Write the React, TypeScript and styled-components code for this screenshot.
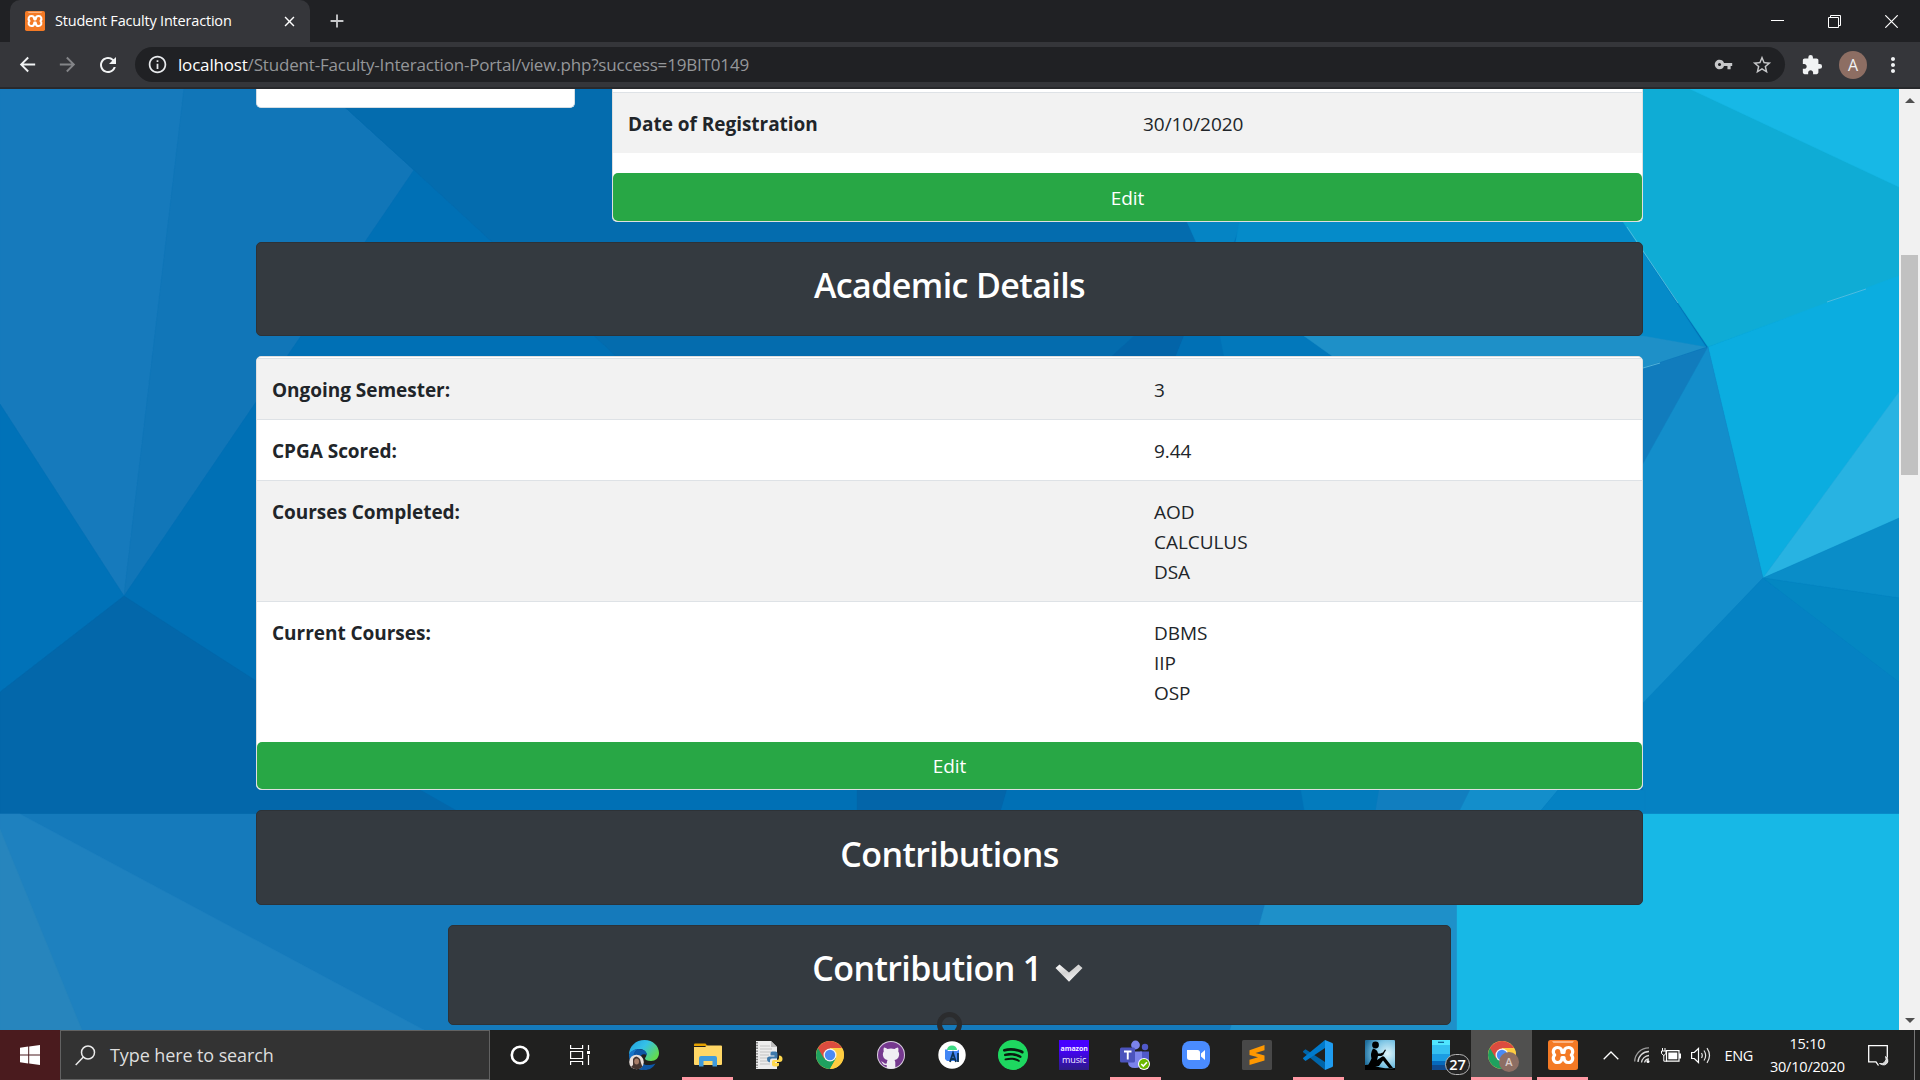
import React from "react";
import styled, { createGlobalStyle } from "styled-components";
import {
  MdArrowBack,
  MdArrowForward,
  MdRefresh,
  MdInfoOutline,
  MdVpnKey,
  MdStarBorder,
  MdExtension,
  MdMoreVert,
  MdClose,
  MdAdd,
} from "react-icons/md";
import { FaSpotify } from "react-icons/fa";

const Global = createGlobalStyle`
  * { box-sizing: border-box; }
  html, body { margin: 0; padding: 0; overflow: hidden; background: #202124; }
  body { font-family: "Open Sans", "Noto Sans", sans-serif; }
  svg { display: block; flex: none; }
`;

const Desktop = styled.div`
  width: 1920px;
  height: 1080px;
  display: flex;
  flex-direction: column;
  overflow: hidden;
`;

/* ---------- browser chrome ---------- */

const TabStrip = styled.div`
  height: 42px;
  display: flex;
  align-items: center;
  padding-left: 10px;
  background: #202124;
  color: #fff;
`;

const Tab = styled.div`
  width: 300px;
  height: 42px;
  display: flex;
  align-items: center;
  padding: 0 12px 0 15px;
  background: #35363a;
  border-radius: 10px 10px 0 0;
`;

const TabTitle = styled.span`
  flex: 1;
  margin-left: 10px;
  font-size: 14.5px;
  letter-spacing: -0.19px;
  line-height: 20px;
  white-space: nowrap;
`;

const NewTab = styled.div`
  margin-left: 16px;
  color: #c8c9cb;
`;

const WindowButtons = styled.div`
  margin-left: auto;
  display: flex;
  height: 36px;
`;

const WindowButton = styled.div`
  width: 57px;
  display: flex;
  align-items: center;
  justify-content: center;
`;

const Toolbar = styled.div`
  height: 47px;
  display: flex;
  align-items: center;
  padding-left: 16px;
  background: #35363a;
  border-bottom: 2px solid #28292c;
`;

const NavIcon = styled.div<{ $dim?: boolean }>`
  width: 40px;
  color: ${(p) => (p.$dim ? "#848588" : "#f1f3f4")};
`;

const Omnibox = styled.div`
  width: 1650px;
  height: 35px;
  display: flex;
  align-items: center;
  padding: 0 12px 0 12px;
  margin-left: -1px;
  border-radius: 18px;
  background: #202124;
  color: #c6c7c9;
`;

const Url = styled.span`
  flex: 1;
  margin-left: 10px;
  font-size: 17px;
  line-height: 24px;
  letter-spacing: -0.18px;
  color: #95979a;
  white-space: nowrap;
  b { font-weight: 400; color: #fff; }
`;

const OmniIcon = styled.div`
  margin-left: 18px;
`;

const ToolbarEnd = styled.div`
  display: flex;
  align-items: center;
  margin-left: 16px;
  color: #f1f3f4;
`;

const Avatar = styled.div`
  width: 28px;
  height: 28px;
  margin: 0 14px 0 16px;
  border-radius: 50%;
  background: #8d6e63;
  font-size: 16px;
  line-height: 28px;
  text-align: center;
`;

/* ---------- page ---------- */

const Viewport = styled.div`
  height: 941px;
  display: flex;
  overflow: hidden;
`;

const Page = styled.div`
  position: relative;
  width: 1899px;
  height: 941px;
  overflow: hidden;
`;

const Backdrop = styled.svg`
  position: absolute;
  left: 0;
  top: 0;
`;

const Content = styled.main`
  position: relative;
  width: 1387px;
  margin-left: 256px;
  display: flex;
  flex-direction: column;
`;

const TopRow = styled.div`
  display: flex;
  align-items: flex-start;
  justify-content: space-between;
`;

const PhotoCard = styled.div`
  width: 319px;
  height: 19px;
  background: #fff;
  border: 1px solid #d5dde3;
  border-top: 0;
  border-radius: 0 0 5px 5px;
`;

const Card = styled.section<{ $width?: number; $cut?: boolean }>`
  width: ${(p) => (p.$width ? `${p.$width}px` : "100%")};
  padding-top: ${(p) => (p.$cut ? 3 : 1)}px;
  background: #fff;
  border: 1px solid #dfdfdf;
  border-top-width: ${(p) => (p.$cut ? 0 : 1)}px;
  border-radius: ${(p) => (p.$cut ? "0 0 5px 5px" : "5px")};
`;

const Row = styled.div<{ $striped?: boolean; $split: number }>`
  display: grid;
  grid-template-columns: ${(p) => p.$split}px 1fr;
  padding: 16px 15px 14px;
  border-top: 1px solid #dee2e6;
  background: ${(p) => (p.$striped ? "#f2f2f2" : "#fff")};
  color: #212529;
  font-size: 19px;
  line-height: 30px;
`;

const Label = styled.div`
  font-weight: 700;
  letter-spacing: -0.03px;
`;

const Value = styled.div`
  letter-spacing: -0.05px;
`;

const EditButton = styled.button<{ $height: number }>`
  display: block;
  width: 100%;
  height: ${(p) => p.$height}px;
  margin-top: 20px;
  padding: 1px 0 0;
  border: 0;
  border-radius: 5px;
  background: #28a745;
  color: #fff;
  font-family: inherit;
  font-size: 19px;
  letter-spacing: -0.1px;
`;

const Banner = styled.header<{ $width?: number; $height: number; $top?: number }>`
  width: ${(p) => (p.$width ? `${p.$width}px` : "100%")};
  height: ${(p) => p.$height}px;
  margin: 20px auto 0;
  padding-top: ${(p) => p.$top ?? 21}px;
  display: flex;
  justify-content: center;
  background: #343a40;
  border: 1px solid #2d3237;
  border-radius: 5px;
  color: #fff;
`;

const Heading = styled.h3`
  display: flex;
  margin: 0;
  font-size: 34px;
  line-height: 42px;
  font-weight: 600;
  letter-spacing: -0.6px;
  white-space: nowrap;
`;

const Chevron = styled.svg`
  margin: 17px 4px 0 13px;
`;

const Spacer = styled.div`
  height: 20px;
`;

const Ring = styled.div`
  position: absolute;
  left: 937px;
  top: 923px;
  width: 25px;
  height: 25px;
  border: 5px solid #2b2c2e;
  border-radius: 50%;
`;

const ScrollTrack = styled.div`
  width: 21px;
  display: flex;
  flex-direction: column;
  align-items: center;
  justify-content: space-between;
  padding: 8px 0 6px;
  background: #f1f1f1;
`;

const Thumb = styled.div`
  width: 17px;
  height: 220px;
  margin: 152px 0 auto;
  background: #c1c1c1;
`;

/* ---------- taskbar ---------- */

const Taskbar = styled.footer`
  height: 50px;
  display: flex;
  background: #20201f;
  color: #fff;
`;

const StartButton = styled.div`
  width: 60px;
  display: flex;
  align-items: center;
  justify-content: center;
  background: #4a1b1e;
`;

const SearchBox = styled.div`
  width: 430px;
  display: flex;
  align-items: center;
  padding-left: 14px;
  background: #333;
  border: 1px solid #626262;
  color: #dedede;
  font-size: 18px;
  letter-spacing: -0.1px;
`;

const SearchText = styled.span`
  margin-left: 14px;
  white-space: nowrap;
`;

const SystemSlot = styled.div`
  width: 60px;
  display: flex;
  align-items: center;
  justify-content: center;
`;

const Apps = styled.div`
  display: flex;
  margin-left: 1px;
`;

const AppSlot = styled.div<{ $open?: boolean; $active?: boolean; $width?: number }>`
  position: relative;
  width: ${(p) => p.$width ?? 61.1}px;
  display: flex;
  align-items: center;
  justify-content: center;
  background: ${(p) => (p.$active ? "#50504f" : "transparent")};
  &::after {
    content: "";
    position: absolute;
    bottom: 0;
    left: ${(p) => (p.$active ? 0 : 5)}px;
    right: ${(p) => (p.$active ? 0 : 5)}px;
    height: ${(p) => (p.$open ? 3 : 0)}px;
    background: #ff99a4;
  }
`;

const AmazonTile = styled.div`
  width: 30px;
  height: 30px;
  padding-top: 3px;
  background: linear-gradient(#4600ff 30%, #2d1b85);
  display: flex;
  flex-direction: column;
  align-items: center;
  line-height: 11px;
`;

const AmazonWord = styled.span<{ $size: number; $weight: number }>`
  height: 11px;
  font-size: ${(p) => p.$size}px;
  font-weight: ${(p) => p.$weight};
  letter-spacing: -0.1px;
  color: #f4efff;
`;

const Badge = styled.div`
  position: absolute;
  left: 35px;
  top: 24px;
  width: 25px;
  height: 21px;
  border: 1px solid #b5b5b5;
  border-radius: 11px;
  background: #242424;
  font-size: 14.5px;
  font-weight: 600;
  line-height: 19px;
  text-align: center;
`;

const Tray = styled.div`
  position: relative;
  flex: 1;
  display: flex;
  align-items: center;
  padding-left: 10px;
`;

const TrayIcon = styled.div<{ $left: number }>`
  margin-left: ${(p) => p.$left}px;
`;

const Language = styled.span`
  width: 31px;
  margin-left: 13px;
  font-size: 14.5px;
  letter-spacing: -0.3px;
`;

const Clock = styled.div`
  width: 80px;
  margin: 0 21px 0 12px;
  font-size: 14.5px;
  letter-spacing: -0.2px;
  line-height: 23px;
  text-align: center;
  white-space: nowrap;
`;

const ShowDesktop = styled.div`
  width: 6px;
  height: 50px;
  margin-left: auto;
  border-left: 1px solid #767676;
`;

/* ---------- drawings ---------- */

const facets: [string, string][] = [
  ["0,89 184,89 124,596 0,404", "#167abc"],
  ["184,89 325,89 414,170 124,596", "#1176b8"],
  ["325,89 640,89 640,356 616,356 414,170", "#046cae"],
  ["414,170 616,356 616,400 300,760 124,596", "#0070b5"],
  ["600,89 1140,89 1187,222 1205,260 1134,336 1112,356 616,356 414,170 325,89", "#046cae"],
  ["1134,336 1184,336 1176,356 1112,356", "#0364a8"],
  ["1184,336 1220,336 1224,356 1176,356", "#0070b5"],
  ["1220,336 1304,336 1332,356 1224,356", "#0278bb"],
  ["1140,89 1290,89 1234,242 1196,242 1187,222", "#0584c4"],
  ["1265,89 1643,89 1643,252 1706,347 1643,337 1234,250", "#058bc9"],
  ["1304,336 1643,336 1706,347 1643,368 1332,356", "#1e90c8"],
  ["1560,89 1920,89 1920,270 1708,347 1623,222", "#0facd5"],
  ["1690,89 1920,89 1920,195 1899,187", "#17b8e6"],
  ["1708,347 1920,268 1920,364 1763,578", "#0badE0"],
  ["1763,578 1899,392 1920,364 1920,509", "#28b3e2"],
  ["1643,368 1708,347 1643,464", "#117cbd"],
  ["1708,347 1763,578 1643,704 1643,464", "#138ecb"],
  ["1643,703 1763,578 1920,698 1920,814 1643,814", "#0582c3"],
  ["1763,578 1899,518 1920,509 1920,601", "#0a8dc8"],
  ["1763,578 1920,601 1920,698", "#0487c2"],
  ["0,404 124,596 0,692", "#0072b8"],
  ["0,692 124,596 457,810 457,814 0,814", "#0367aa"],
  ["421,790 857,790 857,814 463,814", "#0070b5"],
  ["857,790 1007,790 1000,814 857,814", "#0365a9"],
  ["1007,790 1301,790 1305,814 1000,814", "#0070b5"],
  ["1301,790 1379,790 1375,814 1305,814", "#037bbd"],
  ["1379,790 1470,790 1458,814 1375,814", "#117ebf"],
  ["1470,790 1558,790 1538,814 1458,814", "#138ecb"],
  ["1558,790 1645,790 1645,814 1538,814", "#0582c3"],
  ["0,814 1290,814 1230,1030 0,1030", "#157abb"],
  ["0,814 20,814 424,1030 0,1030", "#1e81bf"],
  ["0,829 82,1030 0,1030", "#2785bd"],
  ["1290,814 1457,814 1457,1030 1230,1030", "#1e90c9"],
  ["1457,814 1900,814 1900,1030 1457,1030", "#17b8e6"],
];

const PolyBackdrop = () => (
  <Backdrop width="1899" height="941" viewBox="0 89 1899 941">
    <rect y="89" width="1899" height="941" fill="#0070b5" />
    {facets.map(([points, fill], i) => (
      <polygon key={i} points={points} fill={fill} stroke={fill} strokeWidth="0.4" />
    ))}
    <path d="M1827 302 L1866 289 M1643 368 L1660 363 M1627 227 L1678 303" stroke="#5fbfe0" strokeWidth="0.8" />
  </Backdrop>
);

const Xampp = ({ size }: { size: number }) => (
  <svg width={size} height={size} viewBox="0 0 30 30">
    <rect width="30" height="30" rx="2.500" fill="#f47a25" />
    <path d="M4 1.200h22l-1.500 1.600h-19z" fill="#ffc9a0" />
    <path
      d="M9.500 7.500c3.400 0 4.500 2 4.500 5h2c0-3 1.100-5 4.500-5 4 0 5.500 4.500 2.800 7.500 2.700 3 1.200 7.500-2.800 7.500-3.400 0-4.500-2-4.500-5h-2c0 3-1.100 5-4.500 5-4 0-5.500-4.500-2.800-7.500-2.700-3-1.200-7.500 2.800-7.500z"
      fill="none"
      stroke="#fff"
      strokeWidth="3.200"
      strokeLinejoin="round"
    />
  </svg>
);

const Chrome = () => (
  <svg width="28" height="28" viewBox="0 0 28 28">
    <circle cx="14" cy="14" r="14" fill="#fdd04a" />
    <path d="M14 14 L1.900 7 A14 14 0 0 0 14 28 L20 17.500z" fill="#1fa15f" />
    <path d="M14 14 L8 17.500 L1.900 7 A14 14 0 0 1 26.100 7 L14 7z" fill="#dc4c3f" />
    <path d="M14 7.500H26.300A14 14 0 0 1 14 28L20 17.500z" fill="#ffcd40" />
    <circle cx="14" cy="14" r="6.500" fill="#f4f4f4" />
    <circle cx="14" cy="14" r="5.200" fill="#4a8af4" />
  </svg>
);

const ChromeProfile = styled.div`
  position: relative;
`;

const ProfileDot = styled.div`
  position: absolute;
  left: 11px;
  top: 11px;
  width: 20px;
  height: 20px;
  border-radius: 50%;
  background: #8d6e63;
  color: #d9ccc7;
  font-size: 11px;
  font-weight: 600;
  line-height: 20px;
  text-align: center;
`;

const Edge = () => (
  <svg width="30" height="30" viewBox="0 0 30 30">
    <defs>
      <linearGradient id="edgeTop" x1="0" y1="0" x2="1" y2="0.6">
        <stop offset="0" stopColor="#1f9fe0" />
        <stop offset="0.5" stopColor="#35c1e8" />
        <stop offset="1" stopColor="#62db52" />
      </linearGradient>
    </defs>
    <path d="M0 15C0 6 7 0 15.500 0 24 0 30 6 30 13c0 5-3.500 8-8 8-3.500 0-6-1-6-2.500 0-1 1.500-1.500 1.500-4 0-3-3-5.500-7-5.500-5 0-9 3-10.500 6z" fill="url(#edgeTop)" />
    <path d="M0 15c1-3.500 5-6 9-6-3 2-4.500 5-4.500 8.500C4.500 24 10 29 16 30 7 30.600 0 24 0 15z" fill="#1673c8" />
    <path d="M9 9c5-.5 9 2.500 9 6-4-2-7 0-7 4 0 5 6 8 15.500 4.500C24 28 20 30 16 30 9 30 4 24 4.500 17.500 4.500 13 6.500 10 9 9z" fill="#0e57a6" />
    <circle cx="7.500" cy="22" r="7.300" fill="#e9dfdb" />
    <path d="M4 19q3-5 7 0l1 4 1.500 4q-5.500 4.500-11.500 0L4 25z" fill="#463530" />
    <ellipse cx="7.600" cy="21.500" rx="2.400" ry="3" fill="#a77d68" />
  </svg>
);

const Explorer = () => (
  <svg width="28" height="24" viewBox="0 0 28 24">
    <path d="M0 1.500Q0 .5 1 .5h10.500l2 2.500H0z" fill="#e5a100" />
    <path d="M0 4h11l2-1.500h14q1 0 1 1V21q0 1-1 1H1q-1 0-1-1z" fill="#ffd766" />
    <path d="M5 23.500V15q0-2 2-2h14q2 0 2 2v8.500h-4.500V18h-9v5.500z" fill="#3f9bdc" />
  </svg>
);

const PythonFile = () => (
  <svg width="28" height="28" viewBox="0 0 28 28">
    <path d="M1 0h15l6 6v22H1z" fill="#ececec" />
    <path d="M16 0l6 6h-6z" fill="#bdbdbd" />
    <path d="M2 1v26" stroke="#666" strokeWidth="1.600" strokeDasharray="1.400 1.400" />
    <path d="M5 5h10M5 8h12M5 11h11M5 14h9M5 17h8M5 20h8M5 23h10" stroke="#b9b9b9" strokeWidth="0.8" />
    <path d="M17 10.500h3.500q2 0 2 2V16q0 1.500-1.500 1.500h-4q-2 0-2 2v1.800h-1q-2-.5-2-3.300 0-2.500 2.500-2.500h5v-1h-4v-2q0-2 1.500-2z" fill="#3c78ab" />
    <path d="M24 14.500q3.500.2 3.500 3.500 0 3-3 3h-4.500v1h4v2q0 1.500-3.500 1.500t-3.500-1.800v-3q0-1.700 1.700-1.700H22q2 0 2-2z" fill="#ffd84d" />
  </svg>
);

const GithubDesktop = () => (
  <svg width="28" height="28" viewBox="0 0 28 28">
    <circle cx="14" cy="14" r="14" fill="#d9cfe0" />
    <circle cx="14" cy="14" r="13" fill="#76398f" />
    <path d="M7 6.500q2 0 3.500 1.500 3.500-.8 7 0Q19 6.500 21 6.500q.8 2 .2 3.700Q22.500 12 22 14.500q-.6 3.700-4.500 4.500.8 1 .8 2.500v5.600q-4.300 1.200-8.600 0V24q-3 .4-4-1.500-.7-1.500-1.700-2 1.800-.3 3 1.500 1 1 2.700.5.200-2 .8-3.500-3.900-.8-4.500-4.500-.5-2.500.8-4.300Q6.200 8.500 7 6.500z" fill="#f0edf3" />
  </svg>
);

const AndroidStudio = () => (
  <svg width="28" height="28" viewBox="0 0 28 28">
    <circle cx="14" cy="14" r="13.700" fill="#fff" />
    <path d="M9 9a5 4.500 0 0 1 10 0z" fill="#3ddc84" />
    <path d="M7 8.500h2l1 1.500h9l2-1.500V19l-2 1H9l-2-2z" fill="#4285f4" />
    <path d="M12 21l3-9 3 9M13 18h4M20 12v9" stroke="#0b3354" strokeWidth="1.800" fill="none" />
  </svg>
);

const SpotifyDisc = styled.div`
  width: 30px;
  height: 30px;
  border-radius: 50%;
  background: radial-gradient(#0a1a0f 60%, #1ed760 62%);
  color: #1ed760;
`;

const Teams = () => (
  <svg width="30" height="30" viewBox="0 0 30 30">
    <circle cx="25" cy="7" r="3.200" fill="#5059c9" />
    <circle cx="15.500" cy="5" r="4.400" fill="#7b83eb" />
    <path d="M20 11.500h9v9q0 5-5 5h-4z" fill="#5059c9" />
    <path d="M8 11.500h14V22q0 6-7 6t-7-6z" fill="#7b83eb" />
    <rect x="0" y="7.500" width="15" height="15" rx="1.500" fill="#4b53bc" />
    <path d="M4 11.500h7.500M7.750 11.500v8" stroke="#fff" strokeWidth="1.900" />
    <circle cx="24" cy="24" r="6" fill="#fff" />
    <circle cx="24" cy="24" r="5" fill="#6bb700" />
    <path d="M21.300 24l2 2 3.600-3.800" stroke="#fff" strokeWidth="1.600" fill="none" />
  </svg>
);

const Zoom = () => (
  <svg width="28" height="28" viewBox="0 0 28 28">
    <rect width="28" height="28" rx="8" fill="#4a8cff" />
    <path d="M5 9h10.500q2.500 0 2.500 2.500V19H7.500Q5 19 5 16.500zM19 12.500L23 9v10l-4-3.500z" fill="#fff" />
  </svg>
);

const Sublime = () => (
  <svg width="30" height="30" viewBox="0 0 30 30">
    <rect width="30" height="30" rx="1.500" fill="#484848" />
    <path d="M7.500 10.200L22.500 5v5.300L13.500 13l9 2.500v5L7.500 25v-5.200l8.500-2.600-8.500-2.200z" fill="#ff9800" />
  </svg>
);

const VsCode = () => (
  <svg width="30" height="30" viewBox="0 0 30 30">
    <path d="M2.500 9.200L.3 11q-.6.700 0 1.300L22 30V22z" fill="#0065a9" />
    <path d="M2.500 21L.3 19q-.6-.7 0-1.300L22 0v8z" fill="#007acc" />
    <path d="M22 0l7.300 3q.7.400.7 1.200v21.600q0 .8-.7 1.200L22 30z" fill="#1f9cf0" />
  </svg>
);

const Kindle = () => (
  <svg width="30" height="30" viewBox="0 0 30 30">
    <defs>
      <radialGradient id="kindleSky" cx="0.75" cy="0.45" r="0.8">
        <stop offset="0" stopColor="#dff5fb" />
        <stop offset="0.55" stopColor="#7cc4e4" />
        <stop offset="1" stopColor="#1f6e9c" />
      </radialGradient>
    </defs>
    <rect width="30" height="30" rx="1" fill="url(#kindleSky)" />
    <path d="M0 25q6-1 12 1.500T30 28v2H0z" fill="#000" />
    <circle cx="10.500" cy="5" r="3.400" fill="#000" />
    <path d="M8 8.500q-3 5-1.500 10Q4 24 2.500 26H14l4-5.500 6 7.500h4l-8.500-11q-1.500-1.500-3 0L12 20l1-4h3.500l2-2-1-1.500-2 1H13q-.5-4-5-5z" fill="#000" />
    <path d="M16.500 14.500l3.500-5 1 .6-3.200 5.400z" fill="#000" />
  </svg>
);

const Phone = () => (
  <svg width="18" height="30" viewBox="0 0 18 30">
    <rect width="18" height="30" rx="1" fill="#35c1f1" />
    <path d="M0 0h18v5H0z" fill="#50e6ff" />
    <path d="M6 2.300h6" stroke="#0a5c91" strokeWidth="1.200" />
    <path d="M0 14h18v7H0z" fill="#1b9de2" />
    <path d="M0 21h18v8q0 1-1 1H1q-1 0-1-1z" fill="#0669bc" />
    <path d="M0 25h18v4q0 1-1 1H1q-1 0-1-1z" fill="#0f4a8f" />
  </svg>
);

const academic = [
  { label: "Ongoing Semester:", values: ["3"] },
  { label: "CPGA Scored:", values: ["9.44"] },
  { label: "Courses Completed:", values: ["AOD", "CALCULUS", "DSA"] },
  { label: "Current Courses:", values: ["DBMS", "IIP", "OSP"] },
];

const BrowserChrome = () => (
  <>
    <TabStrip>
      <Tab>
        <Xampp size={20} />
        <TabTitle>Student Faculty Interaction</TabTitle>
        <MdClose size={17} />
      </Tab>
      <NewTab>
        <MdAdd size={22} />
      </NewTab>
      <WindowButtons>
        <WindowButton>
          <svg width="13" height="13">
            <path d="M0 5.500h13" stroke="#fff" />
          </svg>
        </WindowButton>
        <WindowButton>
          <svg width="13" height="13">
            <path d="M.5 2.500h10v10h-10zM2.500 2.500v-2h10v10h-2" stroke="#fff" fill="none" />
          </svg>
        </WindowButton>
        <WindowButton>
          <svg width="13" height="13">
            <path d="M.3.300l12.400 12.400M12.700.300L.3 12.700" stroke="#fff" strokeWidth="1.200" />
          </svg>
        </WindowButton>
      </WindowButtons>
    </TabStrip>
    <Toolbar>
      <NavIcon>
        <MdArrowBack size={23} />
      </NavIcon>
      <NavIcon $dim>
        <MdArrowForward size={23} />
      </NavIcon>
      <NavIcon>
        <MdRefresh size={24} />
      </NavIcon>
      <Omnibox>
        <MdInfoOutline size={21} color="#e8eaed" />
        <Url>
          <b>localhost</b>/Student-Faculty-Interaction-Portal/view.php?success=19BIT0149
        </Url>
        <OmniIcon>
          <MdVpnKey size={19} />
        </OmniIcon>
        <OmniIcon>
          <MdStarBorder size={22} />
        </OmniIcon>
      </Omnibox>
      <ToolbarEnd>
        <MdExtension size={22} />
        <Avatar>A</Avatar>
        <MdMoreVert size={24} />
      </ToolbarEnd>
    </Toolbar>
  </>
);

const PortalPage = () => (
  <Page>
    <PolyBackdrop />
    <Content>
      <TopRow>
        <PhotoCard />
        <Card $width={1031} $cut>
          <Row $striped $split={515}>
            <Label>Date of Registration</Label>
            <Value>30/10/2020</Value>
          </Row>
          <EditButton $height={48}>Edit</EditButton>
        </Card>
      </TopRow>
      <Banner $height={94}>
        <Heading>Academic Details</Heading>
      </Banner>
      <Spacer />
      <Card>
        {academic.map((row, i) => (
          <Row key={row.label} $striped={i % 2 === 0} $split={882}>
            <Label>{row.label}</Label>
            <Value>
              {row.values.map((v) => (
                <div key={v}>{v}</div>
              ))}
            </Value>
          </Row>
        ))}
        <EditButton $height={47}>Edit</EditButton>
      </Card>
      <Banner $height={95} $top={22}>
        <Heading>Contributions</Heading>
      </Banner>
      <Banner $width={1003} $height={100}>
        <Heading>
          Contribution 1
          <Chevron width="28" height="18" viewBox="0 0 28 18">
            <defs>
              <linearGradient id="chev" x1="0" y1="0" x2="0.6" y2="1">
                <stop offset="0" stopColor="#ffffff" />
                <stop offset="0.5" stopColor="#d2d2d2" />
                <stop offset="1" stopColor="#f4f4f4" />
              </linearGradient>
            </defs>
            <path d="M.5 4L4.500.500 14 8.500 23.500.500l4 3.500L14 17.700z" fill="url(#chev)" />
          </Chevron>
        </Heading>
      </Banner>
    </Content>
    <Ring />
  </Page>
);

const Scrollbar = () => (
  <ScrollTrack>
    <svg width="10" height="6">
      <path d="M0 6L5 1l5 5z" fill="#505050" />
    </svg>
    <Thumb />
    <svg width="10" height="6">
      <path d="M0 0l5 5 5-5z" fill="#505050" />
    </svg>
  </ScrollTrack>
);

const TaskbarStrip = () => (
  <Taskbar>
    <StartButton>
      <svg width="20" height="20" viewBox="0 0 20 20">
        <path d="M0 2.800L8.200 1.600V9.500H0zM9.200 1.500L20 0v9.500H9.200zM0 10.500h8.200v7.900L0 17.200zM9.200 10.500H20V20L9.200 18.500z" fill="#fff" />
      </svg>
    </StartButton>
    <SearchBox>
      <svg width="21" height="21" viewBox="0 0 21 21">
        <circle cx="13" cy="7.500" r="6.500" fill="none" stroke="#ececec" strokeWidth="1.500" />
        <path d="M8.400 12.100L.7 20" stroke="#ececec" strokeWidth="1.500" />
      </svg>
      <SearchText>Type here to search</SearchText>
    </SearchBox>
    <SystemSlot>
      <svg width="20" height="20">
        <circle cx="10" cy="10" r="8.200" fill="none" stroke="#fff" strokeWidth="2.600" />
      </svg>
    </SystemSlot>
    <SystemSlot>
      <svg width="20" height="20">
        <path d="M.6 0v3.500h12V0M.6 20v-3.500h12V20M.6 6.500h12v7H.6zM18.500 0v5M18.500 10v10" fill="none" stroke="#fff" strokeWidth="1.200" />
        <path d="M17 6h3v3h-3z" fill="#fff" />
      </svg>
    </SystemSlot>
    <Apps>
      <AppSlot $width={66}><Edge /></AppSlot>
      <AppSlot $open><Explorer /></AppSlot>
      <AppSlot><PythonFile /></AppSlot>
      <AppSlot><Chrome /></AppSlot>
      <AppSlot><GithubDesktop /></AppSlot>
      <AppSlot><AndroidStudio /></AppSlot>
      <AppSlot>
        <SpotifyDisc><FaSpotify size={30} /></SpotifyDisc>
      </AppSlot>
      <AppSlot>
        <AmazonTile>
          <AmazonWord $size={7} $weight={700}>amazon</AmazonWord>
          <AmazonWord $size={9} $weight={400}>music</AmazonWord>
        </AmazonTile>
      </AppSlot>
      <AppSlot $open><Teams /></AppSlot>
      <AppSlot><Zoom /></AppSlot>
      <AppSlot><Sublime /></AppSlot>
      <AppSlot $open><VsCode /></AppSlot>
      <AppSlot><Kindle /></AppSlot>
      <AppSlot>
        <Phone />
        <Badge>27</Badge>
      </AppSlot>
      <AppSlot $open $active>
        <ChromeProfile>
          <Chrome />
          <ProfileDot>A</ProfileDot>
        </ChromeProfile>
      </AppSlot>
      <AppSlot $open><Xampp size={30} /></AppSlot>
    </Apps>
    <Tray>
      <svg width="16" height="9">
        <path d="M.7 8.300L8 1l7.300 7.300" fill="none" stroke="#fff" strokeWidth="1.300" />
      </svg>
      <TrayIcon $left={15}>
        <svg width="16" height="16">
          <path d="M.7 14.500A14 14 0 0 1 15 .8" fill="none" stroke="#9b9b9b" strokeWidth="1.300" />
          <path d="M4 15A11 11 0 0 1 15 4.500M7.500 15.500A8 8 0 0 1 15 8.500M10.500 15.500A5 5 0 0 1 15 12" fill="none" stroke="#dcdcdc" strokeWidth="1.300" />
          <circle cx="14" cy="14.500" r="1.500" fill="#fff" />
        </svg>
      </TrayIcon>
      <TrayIcon $left={11}>
        <svg width="20" height="15">
          <path d="M5.500 2.600h12.500v10.500h-12.500z M18.500 6h1v4h-1z" fill="none" stroke="#fff" strokeWidth="1.200" />
          <path d="M7.300 4.500h9v6.800h-9z" fill="#fff" />
          <path d="M1.500 0v3M4 0v3M.5 3h4.500v2.500L2.800 7.500.5 5.500zM2.800 7v6.200h3" fill="none" stroke="#fff" />
        </svg>
      </TrayIcon>
      <TrayIcon $left={10}>
        <svg width="20" height="17">
          <path d="M.6 5.500h2.700L7.500 1.500v14L3.300 11.500H.6z" fill="none" stroke="#fff" strokeWidth="1.200" />
          <path d="M10.500 6q1.500 2.500 0 5M13 3.500q3.300 5 0 10M16 1.200q5 7.300 0 14.600" fill="none" stroke="#e6e6e6" strokeWidth="1.200" />
        </svg>
      </TrayIcon>
      <Language>ENG</Language>
      <Clock>
        15:10
        <br />
        30/10/2020
      </Clock>
      <svg width="21" height="21">
        <path d="M10.500 20.500L8 16.800H.7V.7h18.600v12" fill="none" stroke="#fff" strokeWidth="1.300" />
        <path d="M17.500 11.500a5 5 0 0 1-6 7q6 3.500 8.300-1.500.8-3.500-2.300-5.500z" fill="#d8d8d8" stroke="#fff" strokeWidth="0.8" />
      </svg>
      <ShowDesktop />
    </Tray>
  </Taskbar>
);

export default function App() {
  return (
    <Desktop>
      <Global />
      <BrowserChrome />
      <Viewport>
        <PortalPage />
        <Scrollbar />
      </Viewport>
      <TaskbarStrip />
    </Desktop>
  );
}
